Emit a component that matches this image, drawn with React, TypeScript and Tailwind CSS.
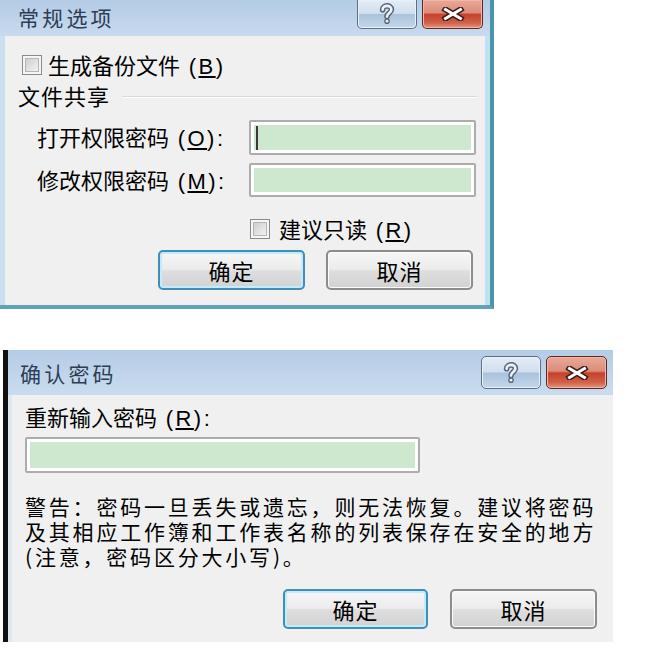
import React from "react";

const FONT = "font-['Noto_Sans_CJK_SC','Noto_Sans_CJK_JP',sans-serif]";

function Mn({ k, colon }: { k: string; colon?: boolean }) {
  return (
    <span className="font-['Liberation_Sans','Noto_Sans',sans-serif] text-[22px] tracking-[2.5px]">
      {" ("}
      <u>{k}</u>
      {colon ? "):" : ")"}
    </span>
  );
}

function Checkbox() {
  return (
    <div className="w-[20px] h-[20px] border-[1.5px] border-[#8a8a8a] bg-[#f6f6f6] p-[2px] shrink-0">
      <div className="w-full h-full border border-[#b5b5b5] bg-gradient-to-br from-[#cfcfcf] to-[#f2f2f2]" />
    </div>
  );
}

function Input({ w, h, cursor }: { w: number; h: number; cursor?: boolean }) {
  return (
    <div
      className="border-2 border-[#acacac] bg-white p-[3px] rounded-[2px] shrink-0"
      style={{ width: w, height: h }}
    >
      <div className="w-full h-full bg-[#cde8cf] flex items-center">
        {cursor && <div className="ml-[2px] w-[2px] h-[24px] bg-[#3a3a3a]" />}
      </div>
    </div>
  );
}

function Btn({ label, primary, w }: { label: string; primary?: boolean; w: number }) {
  return (
    <div
      className={
        "h-[40px] rounded-[5px] border-2 flex items-center justify-center text-[22px] leading-none text-black bg-[linear-gradient(to_bottom,#f6f6f6_0%,#ececec_48%,#dedede_52%,#d2d2d2_100%)] " +
        (primary
          ? "border-[#3f8fb6] shadow-[inset_0_0_0_2px_#c4ebfa]"
          : "border-[#8c8c8c] shadow-[inset_0_0_0_1px_#fbfbfb]")
      }
      style={{ width: w }}
    >
      <span className="tracking-[1px]">{label}</span>
    </div>
  );
}

function HelpGlyph() {
  return (
    <svg width="16" height="22" viewBox="0 0 16 22">
      <path d="M3.6 6.8 C3.6 1.6 12.4 1.6 12.4 6.6 C12.4 10 8 10 8 13.6" fill="none" stroke="#56677a" strokeWidth="5.6" strokeLinecap="round" />
      <path d="M3.6 6.8 C3.6 1.6 12.4 1.6 12.4 6.6 C12.4 10 8 10 8 13.6" fill="none" stroke="#eef2f7" strokeWidth="2.6" strokeLinecap="round" />
      <circle cx="8" cy="18.2" r="2.8" fill="#56677a" />
      <circle cx="8" cy="18.2" r="1.4" fill="#eef2f7" />
    </svg>
  );
}

function CloseGlyph() {
  return (
    <svg width="24" height="14" viewBox="0 0 24 14">
      <path d="M4.5 2.5 L19.5 11.5 M19.5 2.5 L4.5 11.5" stroke="#3b1b18" strokeWidth="6" strokeLinecap="square" />
      <path d="M4.5 2.5 L19.5 11.5 M19.5 2.5 L4.5 11.5" stroke="#ffffff" strokeWidth="3" strokeLinecap="square" />
    </svg>
  );
}

function CaptionButtons({ top, h }: { top?: boolean; h: number }) {
  const r = top ? "rounded-b-[5px] border-t-0" : "rounded-[5px]";
  return (
    <div className="flex gap-[5px]">
      <div
        className={"w-[60px] border border-[#5b6f87] flex items-center justify-center bg-[linear-gradient(to_bottom,#e4edf7_0%,#d0deee_48%,#aac2dc_52%,#c4d7ea_100%)] shadow-[inset_0_0_0_1px_#e8f0f8] " + r}
        style={{ height: h }}
      >
        <HelpGlyph />
      </div>
      <div
        className={"w-[61px] border border-[#62251f] flex items-center justify-center bg-[linear-gradient(to_bottom,#eaa998_0%,#dc8c7a_45%,#c6412b_52%,#d0614a_82%,#e3997e_100%)] shadow-[inset_0_0_0_1px_#f0b8a8] " + r}
        style={{ height: h }}
      >
        <CloseGlyph />
      </div>
    </div>
  );
}

export default function App() {
  return (
    <div className={"w-[670px] h-[658px] bg-white overflow-hidden flex flex-col " + FONT}>
      {/* Dialog 1 */}
      <div className="w-[494px] flex flex-col border-r-[4px] border-r-[#4b95aa] border-b-[4px] border-b-[#5ea4b9] bg-[#c9dcef]">
        <div className="h-[36px] flex items-start bg-gradient-to-b from-[#b3cbe5] to-[#c8daee] pr-[7px]">
          <div className="pl-[18px] pt-[4px] text-[21px] leading-[26px] tracking-[3.2px] text-[#2c3e53]">常规选项</div>
          <div className="flex-1" />
          <CaptionButtons top h={29} />
        </div>
        <div className="flex">
          <div className="w-[5px] bg-[#cbdff1]" />
          <div className="w-[480px] h-[269px] bg-[#f0f0f0] flex flex-col text-[22px] leading-[22px] text-black">
            <div className="flex items-center mt-[18px] ml-[17px] h-[22px]">
              <Checkbox />
              <span className="ml-[6px] whitespace-nowrap">生成备份文件<Mn k="B" /></span>
            </div>
            <div className="flex items-center mt-[8px] ml-[13px] h-[22px]">
              <span className="tracking-[1px]">文件共享</span>
              <div className="flex-1 ml-[12px] mr-[8px] mt-[4px] border-t border-t-[#d3d9de] border-b border-b-white" />
            </div>
            <div className="flex items-center mt-[14px] h-[35px]">
              <span className="ml-[32px] w-[212px] whitespace-nowrap">打开权限密码<Mn k="O" colon /></span>
              <Input w={227} h={35} cursor />
            </div>
            <div className="flex items-center mt-[8px] h-[34px]">
              <span className="ml-[32px] w-[212px] whitespace-nowrap">修改权限密码<Mn k="M" colon /></span>
              <Input w={227} h={34} />
            </div>
            <div className="flex items-center mt-[21px] ml-[245px] h-[22px]">
              <Checkbox />
              <span className="ml-[9px] whitespace-nowrap">建议只读<Mn k="R" /></span>
            </div>
            <div className="flex mt-[10px] ml-[153px] gap-[21px]">
              <Btn label="确定" primary w={147} />
              <Btn label="取消" w={147} />
            </div>
          </div>
          <div className="w-[5px] bg-[#bfe2f2]" />
        </div>
      </div>

      {/* Dialog 2 */}
      <div className="mt-[41px] ml-[3px] flex">
        <div className="w-[5px] bg-[#111111]" />
        <div className="w-[605px] flex flex-col">
          <div className="h-[45px] flex items-center bg-gradient-to-b from-[#b5cce6] to-[#cadcef] pr-[6px]">
            <div className="pl-[12px] text-[21px] leading-[26px] tracking-[3.2px] text-[#2c3e53]">确认密码</div>
            <div className="flex-1" />
            <CaptionButtons h={33} />
          </div>
          <div className="flex">
            <div className="w-[4px] bg-[#dfe7ef]" />
            <div className="w-[601px] h-[247px] bg-[#f0f0f0] flex flex-col text-[22px] leading-[22px] text-black">
              <div className="mt-[10px] ml-[13px] h-[22px] whitespace-nowrap">重新输入密码<Mn k="R" colon /></div>
              <div className="mt-[10px] ml-[13px]">
                <Input w={395} h={36} />
              </div>
              <div className="mt-[21px] ml-[13px] text-[21px] tracking-[2.8px] whitespace-nowrap flex flex-col">
                <div className="h-[25px] leading-[25px]">警告：密码一旦丢失或遗忘，则无法恢复。建议将密码</div>
                <div className="h-[25px] leading-[25px]">及其相应工作簿和工作表名称的列表保存在安全的地方</div>
                <div className="h-[25px] leading-[25px]">(注意，密码区分大小写)。</div>
              </div>
              <div className="flex mt-[20px] ml-[271px] gap-[22px]">
                <Btn label="确定" primary w={145} />
                <Btn label="取消" w={147} />
              </div>
            </div>
          </div>
        </div>
      </div>
    </div>
  );
}
